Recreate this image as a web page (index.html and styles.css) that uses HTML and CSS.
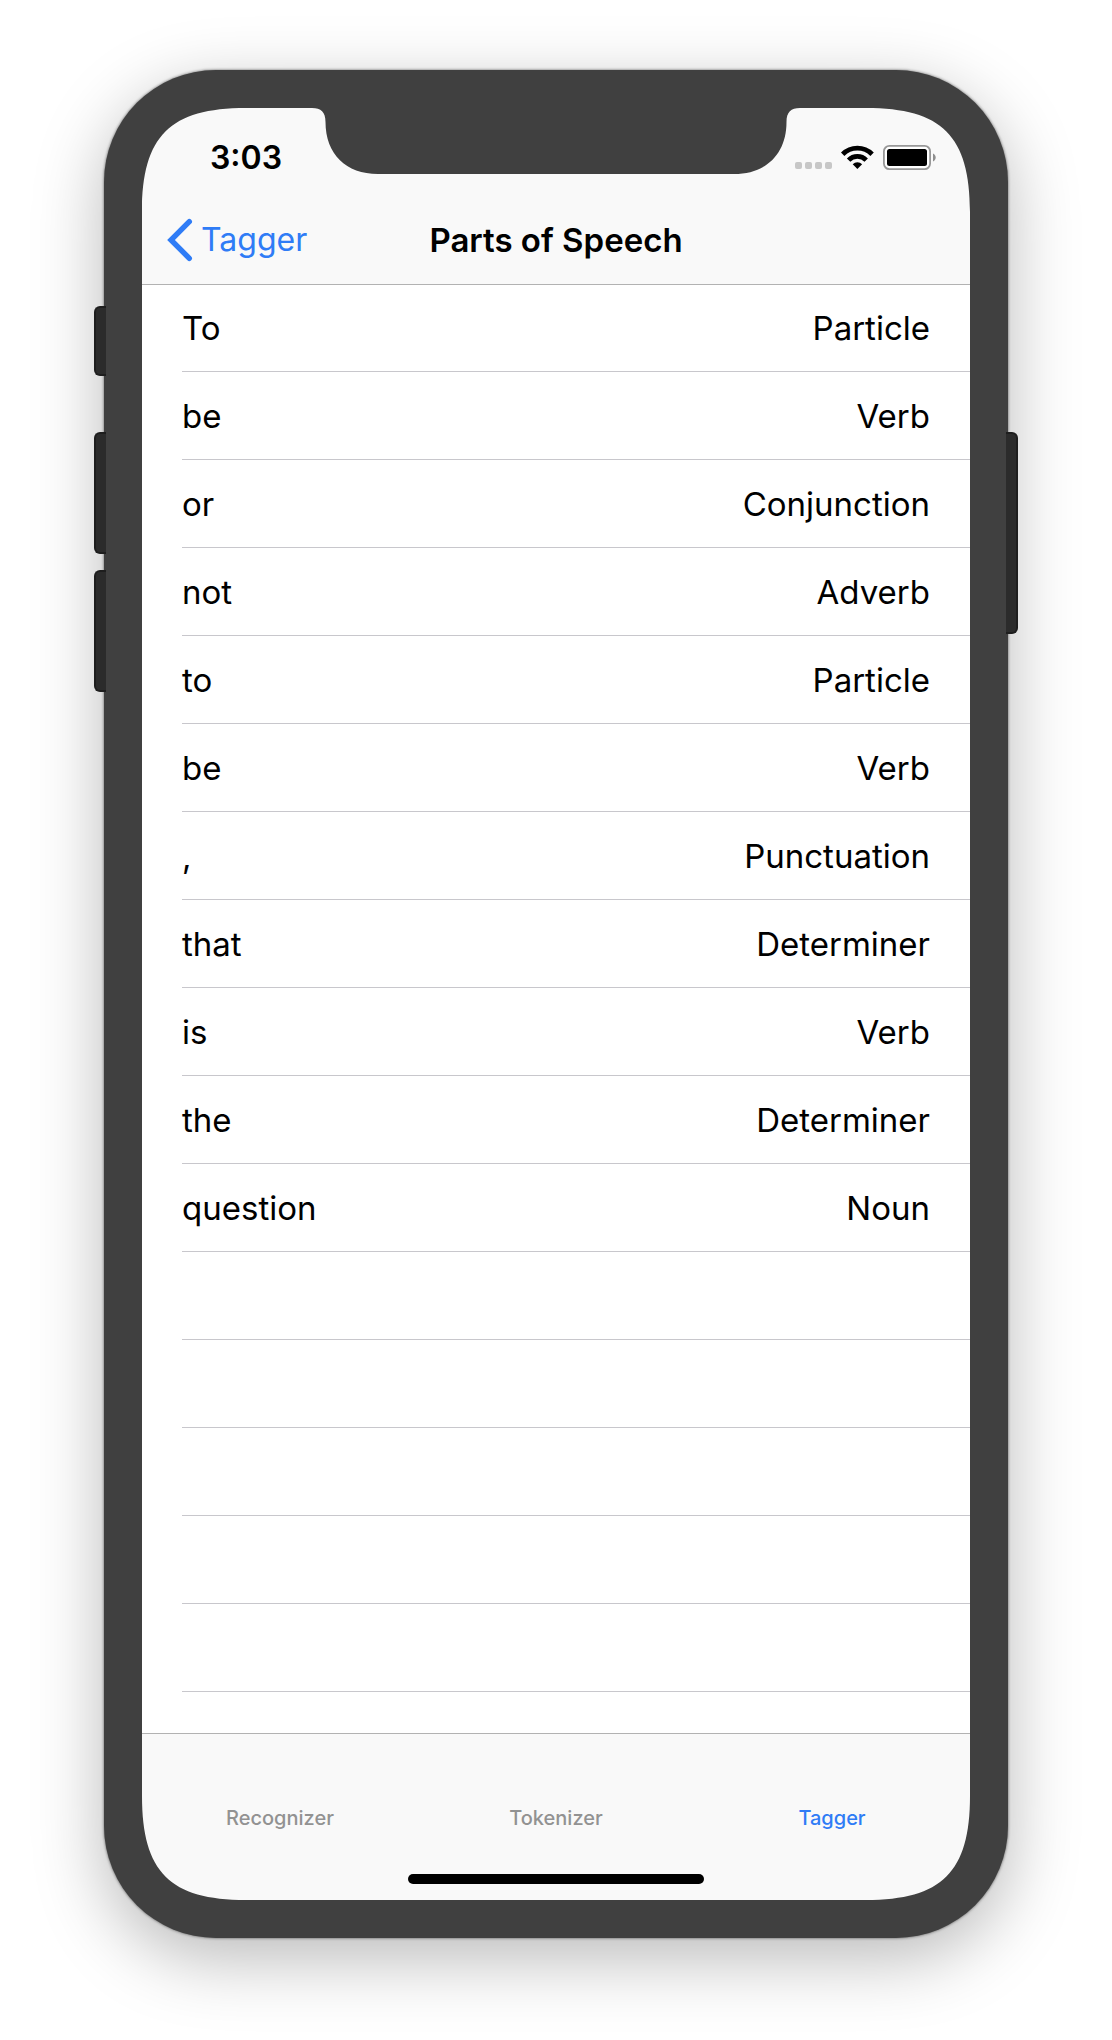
FILE: index.html
```html
<!DOCTYPE html>
<html lang="en">
<head>
<meta charset="utf-8">
<meta name="viewport" content="width=device-width, initial-scale=1">
<title>Parts of Speech</title>
<link rel="stylesheet" href="styles.css">
</head>
<body>
<div class="device">
  <span class="key key-mute"></span>
  <span class="key key-up"></span>
  <span class="key key-down"></span>
  <span class="key key-power"></span>

  <div class="screen">
    <header class="top">
      <div class="status">
        <span class="time">3:03</span>
        <svg class="status-icons" width="141" height="26" viewBox="0 0 141 26" aria-hidden="true">
          <g fill="#c7c7c7">
            <rect x="0" y="17" width="7" height="7" rx="2"/>
            <rect x="10" y="17" width="7" height="7" rx="2"/>
            <rect x="20" y="17" width="7" height="7" rx="2"/>
            <rect x="30" y="17" width="7" height="7" rx="2"/>
          </g>
          <g fill="none" stroke="#000" stroke-width="4.8">
            <path d="M47.7 9.2A20.8 20.8 0 0 1 77.1 9.2"/>
            <path d="M53.6 15.1A12.4 12.4 0 0 1 71.2 15.1"/>
          </g>
          <path d="M62.4 24L57.7 19.3A6.7 6.7 0 0 1 67.1 19.3Z"/>
          <rect x="88.9" y="0.9" width="46.2" height="23.2" rx="5.5" fill="#fff" stroke="#989898" stroke-width="1.8"/>
          <rect x="92" y="4" width="40" height="17" rx="2.5"/>
          <path d="M138 8.500C141.6 10 141.6 15 138 16.500Z" fill="#8e8e8e"/>
        </svg>
      </div>
      <nav class="navbar">
        <a class="back" href="#tagger">
          <svg width="26" height="44" viewBox="0 0 26 44" aria-hidden="true">
            <path d="M22.3 3.7L4 22L22.3 40.3" fill="none" stroke="#2f7cf6" stroke-width="5.4" stroke-linecap="round"/>
          </svg>
          <span>Tagger</span>
        </a>
        <h1>Parts of Speech</h1>
      </nav>
    </header>

    <main class="list">
      <table class="words" aria-label="Parts of Speech">
        <tbody>
          <tr><td>To</td><td>Particle</td></tr>
          <tr><td>be</td><td>Verb</td></tr>
          <tr><td>or</td><td>Conjunction</td></tr>
          <tr><td>not</td><td>Adverb</td></tr>
          <tr><td>to</td><td>Particle</td></tr>
          <tr><td>be</td><td>Verb</td></tr>
          <tr><td>,</td><td>Punctuation</td></tr>
          <tr><td>that</td><td>Determiner</td></tr>
          <tr><td>is</td><td>Verb</td></tr>
          <tr><td>the</td><td>Determiner</td></tr>
          <tr><td>question</td><td>Noun</td></tr>
        </tbody>
      </table>
      <div class="empty-rows"></div>
    </main>

    <footer class="bottom">
      <nav class="tabs">
        <a href="#recognizer">Recognizer</a>
        <a href="#tokenizer">Tokenizer</a>
        <a class="active" href="#tagger" aria-current="page">Tagger</a>
      </nav>
      <div class="home-indicator"></div>
    </footer>

    <svg class="corner corner-tl" width="104" height="104" aria-hidden="true"><path d="M0 0H104C28 0 0 28 0 104Z"/></svg>
    <svg class="corner corner-tr" width="104" height="104" aria-hidden="true"><path d="M104 0H0C76 0 104 28 104 104Z"/></svg>
    <svg class="corner corner-bl" width="104" height="104" aria-hidden="true"><path d="M0 104V0C0 76 28 104 104 104Z"/></svg>
    <svg class="corner corner-br" width="104" height="104" aria-hidden="true"><path d="M104 104V0C104 76 76 104 0 104Z"/></svg>
    <svg class="notch" width="488" height="66" viewBox="0 0 488 66" aria-hidden="true">
      <path d="M0 0C9 0 13.5 4 13.5 14C13.5 46 34 66 66 66H422C454 66 474.500 46 474.500 14C474.500 4 479 0 488 0Z"/>
    </svg>
  </div>
</div>
</body>
</html>
```
FILE: styles.css
```css
* {
  box-sizing: border-box;
}

body {
  margin: 0;
  padding: 70px 104px 102px;
  background: #fff;
  color: #000;
  font-family: Inter, "Liberation Sans", sans-serif;
  font-size: 33px;
  line-height: 40px;
}

a {
  color: #2f7cf6;
  text-decoration: none;
}

/* Phone body */
.device {
  position: relative;
  padding: 38px;
  border-radius: 112px;
  background: #404040;
  box-shadow: 0 0 3px rgba(0, 0, 0, 0.6), 0 20px 70px rgba(0, 0, 0, 0.28);
}

.key {
  position: absolute;
  width: 12px;
  border: 2px solid #1e1e1e;
  background: #2b2b2b;
}

.key-mute,
.key-up,
.key-down {
  left: -10px;
  border-right: 0;
  border-radius: 6px 0 0 6px;
}

.key-mute {
  top: 236px;
  height: 70px;
}

.key-up {
  top: 362px;
  height: 122px;
}

.key-down {
  top: 500px;
  height: 122px;
}

.key-power {
  top: 362px;
  right: -10px;
  height: 202px;
  border-left: 0;
  border-radius: 0 6px 6px 0;
}

.screen {
  position: relative;
  background: #fff;
}

.corner,
.notch {
  position: absolute;
  z-index: 2;
  fill: #404040;
}

.corner-tl {
  top: 0;
  left: 0;
}

.corner-tr {
  top: 0;
  right: 0;
}

.corner-bl {
  bottom: 0;
  left: 0;
}

.corner-br {
  right: 0;
  bottom: 0;
}

.notch {
  top: 0;
  left: calc(50% - 244px);
}

/* Status and navigation bars */
.top {
  position: relative;
  z-index: 1;
  background: #f9f9f9;
  box-shadow: 0 1px #b2b2b2;
}

.status {
  display: flex;
  align-items: center;
  justify-content: space-between;
  height: 88px;
  padding: 12px 34px 0 68px;
}

.time {
  font-size: 32px;
  font-weight: 600;
}

.navbar {
  display: grid;
  grid-template-columns: 1fr auto 1fr;
  align-items: center;
  height: 88px;
  padding: 0 25px;
}

.back {
  display: flex;
  align-items: center;
  gap: 8px;
  font-size: 32px;
}

h1 {
  margin: 0;
  font-size: 33px;
  font-weight: 600;
}

/* Word list */
.words {
  width: calc(100% - 40px);
  margin-left: 40px;
  border-collapse: separate;
  border-spacing: 0;
}

.words td {
  height: 88px;
  padding: 0;
  border-bottom: 1px solid #c8c7cc;
}

.words td:last-child {
  padding-right: 40px;
  text-align: right;
}

.empty-rows {
  height: 481px;
  margin-left: 40px;
  background: repeating-linear-gradient(#fff 0 87px, #c8c7cc 87px 88px);
}

/* Tab bar */
.bottom {
  display: flex;
  flex-direction: column;
  align-items: center;
  padding: 70px 0 16px;
  border-top: 1px solid #b2b2b2;
  background: #f9f9f9;
}

.tabs {
  display: grid;
  grid-template-columns: repeat(3, 1fr);
  width: 100%;
  margin-bottom: 42px;
  font-size: 20px;
  font-weight: 500;
  line-height: 28px;
  text-align: center;
}

.tabs a {
  color: #929292;
}

.tabs .active {
  color: #2f7cf6;
}

.home-indicator {
  width: 296px;
  height: 10px;
  border-radius: 5px;
  background: #000;
}
```
